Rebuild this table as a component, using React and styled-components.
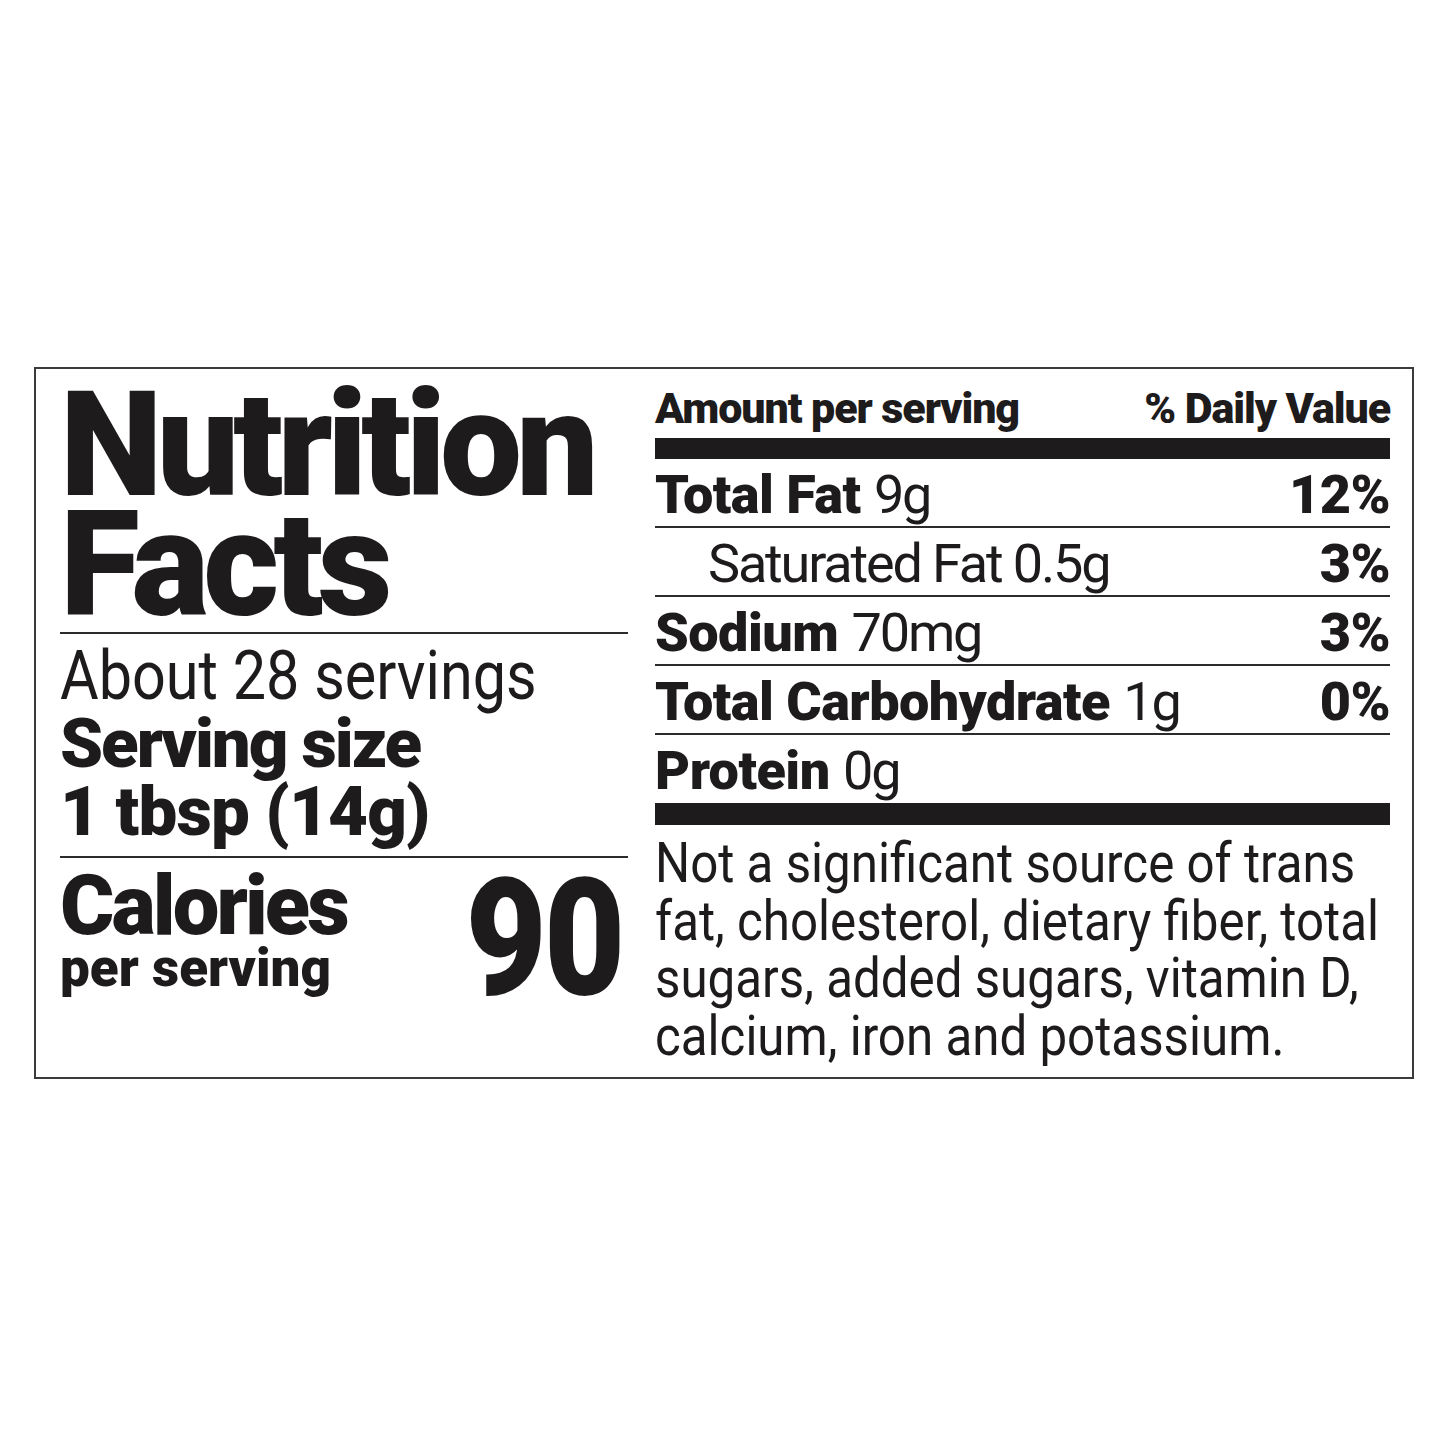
import React from 'react';
import styled, { createGlobalStyle } from 'styled-components';

const ink = '#1e1b1c';
const face = '"Roboto", "Liberation Sans", Arial, sans-serif';

const GlobalStyle = createGlobalStyle`
  html, body {
    margin: 0;
    background: #ffffff;
  }
  body {
    font-family: ${face};
    color: ${ink};
  }
`;

const nutrients = [
  { name: 'Total Fat', amount: '9g', dv: '12%' },
  { name: 'Saturated Fat', amount: '0.5g', dv: '3%', sub: true },
  { name: 'Sodium', amount: '70mg', dv: '3%' },
  { name: 'Total Carbohydrate', amount: '1g', dv: '0%' },
  { name: 'Protein', amount: '0g', last: true },
];

const footnote = [
  'Not a significant source of trans',
  'fat, cholesterol, dietary fiber, total',
  'sugars, added sugars, vitamin D,',
  'calcium, iron and potassium.',
];

const App = () => {
  return (
    <Page>
      <GlobalStyle />
      <Label>
        <LeftCol>
          <Title>
            Nutrition
            <br />
            Facts
          </Title>
          <Rule />
          <Servings>
            <ServingCount>About 28 servings</ServingCount>
            <ServingSize $track={-0.03}>Serving size</ServingSize>
            <ServingSize $track={-0.012}>1 tbsp (14g)</ServingSize>
          </Servings>
          <Rule />
          <CaloriesRow>
            <CaloriesText>
              <CaloriesWord>Calories</CaloriesWord>
              <PerServing>per serving</PerServing>
            </CaloriesText>
            <CaloriesValue>90</CaloriesValue>
          </CaloriesRow>
        </LeftCol>

        <RightCol>
          <HeaderRow>
            <span>Amount per serving</span>
            <span>% Daily Value</span>
          </HeaderRow>
          <Bar $h={21} />
          {nutrients.map((n) => (
            <NutrientRow key={n.name} $sub={n.sub} $last={n.last}>
              <span>
                {n.sub ? (
                  <Amount>{n.name} {n.amount}</Amount>
                ) : (
                  <>
                    <Name>{n.name}</Name> <Amount>{n.amount}</Amount>
                  </>
                )}
              </span>
              {n.dv && <Percent>{n.dv}</Percent>}
            </NutrientRow>
          ))}
          <Bar $h={22} />
          <Footnote>
            {footnote.map((line) => (
              <div key={line}>{line}</div>
            ))}
          </Footnote>
        </RightCol>
      </Label>
    </Page>
  );
};

const Page = styled.div`
  padding: 367px 0 0 34px;
  min-height: 1445px;
  box-sizing: border-box;
`;

const Label = styled.section`
  box-sizing: border-box;
  width: 1380px;
  height: 712px;
  border: 2px solid #3b3b3b;
  padding: 0 22px 0 24px;
  display: grid;
  grid-template-columns: 568px 735px;
  column-gap: 27px;
`;

const LeftCol = styled.div`
  display: flex;
  flex-direction: column;
  padding-top: 17px;
`;

const Title = styled.h1`
  margin: 0 0 6px;
  font-size: 146px;
  line-height: 120px;
  font-weight: 900;
  letter-spacing: -0.04em;
`;

const Rule = styled.div`
  height: 2px;
  background: #2b2b2b;
`;

const Servings = styled.div`
  padding: 8px 0 10px;
  line-height: 68px;
`;

const ServingCount = styled.div`
  font-size: 69px;
  font-weight: 400;
  transform: scaleX(0.86);
  transform-origin: left center;
  white-space: nowrap;
`;

const ServingSize = styled.div`
  font-size: 69px;
  font-weight: 900;
  letter-spacing: ${(p) => p.$track}em;
  white-space: nowrap;
`;

const CaloriesRow = styled.div`
  display: flex;
  justify-content: space-between;
  align-items: flex-start;
  padding: 13px 6px 0 0;
`;

const CaloriesText = styled.div`
  display: flex;
  flex-direction: column;
  font-weight: 900;
`;

const CaloriesWord = styled.div`
  font-size: 83px;
  line-height: 70px;
  letter-spacing: -0.035em;
`;

const PerServing = styled.div`
  font-size: 53px;
  line-height: 55px;
`;

const CaloriesValue = styled.div`
  margin-top: 3px;
  font-size: 163px;
  line-height: 130px;
  font-weight: 900;
  letter-spacing: -0.02em;
  transform: scaleX(0.86);
  transform-origin: right top;
`;

const RightCol = styled.div`
  display: flex;
  flex-direction: column;
  padding-top: 19px;
  min-width: 0;
`;

const HeaderRow = styled.div`
  display: flex;
  justify-content: space-between;
  font-size: 43px;
  line-height: 40px;
  font-weight: 900;
  letter-spacing: -0.025em;
  margin-bottom: 10px;
  white-space: nowrap;
`;

const Bar = styled.div`
  height: ${(p) => p.$h}px;
  background: ${ink};
`;

const NutrientRow = styled.div`
  box-sizing: border-box;
  height: ${(p) => (p.$last ? 68 : 69)}px;
  padding: 4px 0 0 ${(p) => (p.$sub ? 53 : 0)}px;
  border-bottom: ${(p) => (p.$last ? 'none' : '2px solid #2b2b2b')};
  display: flex;
  justify-content: space-between;
  font-size: 54px;
  line-height: 63px;
  white-space: nowrap;
`;

const Name = styled.span`
  font-weight: 900;
  letter-spacing: -0.01em;
`;

const Amount = styled.span`
  font-weight: 400;
  letter-spacing: -0.04em;
`;

const Percent = styled.span`
  font-weight: 900;
  letter-spacing: -0.01em;
`;

const Footnote = styled.div`
  padding-top: 10px;
  font-size: 56px;
  line-height: 57.5px;
  font-weight: 400;
  white-space: nowrap;
  transform: scaleX(0.88);
  transform-origin: left top;
`;

export default App;
